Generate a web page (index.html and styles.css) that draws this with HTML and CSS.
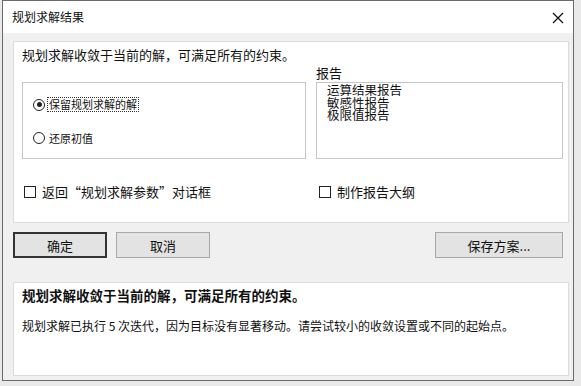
FILE: index.html
```html
<!DOCTYPE html>
<html lang="zh-CN">
<head>
  <meta charset="UTF-8">
  <title>规划求解结果</title>
  <link rel="stylesheet" href="styles.css">
</head>
<body>
  <div class="dialog">
    <!-- Title bar -->
    <div class="titlebar">
      <span class="title">规划求解结果</span>
      <svg class="close" width="12" height="12" viewBox="0 0 12 12">
        <path d="M1 1 L11 11 M11 1 L1 11" stroke="#111" stroke-width="1.3" fill="none"/>
      </svg>
    </div>

    <div class="dialog-body">
      <!-- Result options -->
      <div class="panel panel-top">
        <p class="message">规划求解收敛于当前的解，可满足所有的约束。</p>
        <div class="options">
          <div class="groupbox">
            <label class="radio-row">
              <span class="radio checked"></span>
              <span class="focus-label">保留规划求解的解</span>
            </label>
            <label class="radio-row">
              <span class="radio"></span>
              <span class="radio-text">还原初值</span>
            </label>
          </div>
          <div class="reports">
            <div class="reports-label">报告</div>
            <ul class="listbox">
              <li>运算结果报告</li>
              <li>敏感性报告</li>
              <li>极限值报告</li>
            </ul>
          </div>
        </div>
        <div class="checks">
          <label class="check-row check-left"><span class="checkbox"></span>返回“规划求解参数”对话框</label>
          <label class="check-row"><span class="checkbox"></span>制作报告大纲</label>
        </div>
      </div>

      <!-- Buttons -->
      <div class="buttons">
        <button class="btn btn-default">确定</button>
        <button class="btn">取消</button>
        <button class="btn btn-save">保存方案...</button>
      </div>

      <!-- Info -->
      <div class="panel panel-info">
        <p class="info-title">规划求解收敛于当前的解，可满足所有的约束。</p>
        <p class="info-text">规划求解已执行 5 次迭代，因为目标没有显著移动。请尝试较小的收敛设置或不同的起始点。</p>
      </div>
    </div>
  </div>
</body>
</html>
```

FILE: styles.css
```css
body {
  margin: 0;
  background: #e9e9e9;
  font-family: "Noto Sans CJK SC", "Liberation Sans", sans-serif;
  color: #111;
}
.dialog {
  margin-left: 2px;
  width: 570px;
  height: 379px;
  border: 1px solid #6a6a6a;
  background: #f0f0f0;
  display: flex;
  flex-direction: column;
}
.titlebar {
  height: 32px;
  background: #fff;
  display: flex;
  align-items: center;
  justify-content: space-between;
  padding: 0 9px 0 9px;
}
.title {
  font-size: 12px;
  margin-top: -1px;
}
.close {
  display: block;
  margin-top: 1px;
}
.dialog-body {
  padding: 8px 4px 0 10px;
}
.panel {
  background: #fff;
  border: 1px solid #dcdcdc;
}
.panel-top {
  height: 180px;
  padding: 0 5px 0 8px;
}
p {
  margin: 0;
}
.message {
  font-size: 13px;
  line-height: 16px;
  margin-top: 5px;
}
.options {
  display: flex;
  gap: 10px;
  margin-top: 2px;
}
.groupbox {
  margin-top: 17px;
  width: 284px;
  height: 77px;
  box-sizing: border-box;
  border: 1px solid #c6c6c6;
  display: flex;
  flex-direction: column;
  padding: 14px 0 0 10px;
  gap: 18px;
}
.radio-row {
  display: flex;
  align-items: center;
  font-size: 11px;
  height: 15px;
}
.radio {
  width: 10px;
  height: 10px;
  border: 1px solid #222;
  border-radius: 50%;
  background: #fff;
  position: relative;
  margin-right: 2px;
}
.radio.checked::after {
  content: "";
  position: absolute;
  left: 2.5px;
  top: 2.5px;
  width: 5px;
  height: 5px;
  border-radius: 50%;
  background: #222;
}
.focus-label {
  border: 1px dotted #333;
  padding: 0 1px;
  line-height: 13px;
}
.radio-text {
  padding-left: 2px;
}
.reports {
  flex: 1;
}
.reports-label {
  font-size: 13px;
  line-height: 16px;
  height: 17px;
}
.listbox {
  list-style: none;
  margin: 0;
  height: 77px;
  box-sizing: border-box;
  border: 1px solid #c6c6c6;
  padding: 0 0 0 10px;
  font-size: 12.5px;
  line-height: 13px;
}
.listbox li {
  height: 12.5px;
}
.checks {
  display: flex;
  margin-top: 23px;
  padding-left: 2px;
}
.check-row {
  display: flex;
  align-items: center;
  font-size: 13px;
  gap: 6px;
}
.check-left {
  width: 295px;
}
.checkbox {
  width: 10px;
  height: 10px;
  border: 1px solid #222;
  background: #fff;
}
.buttons {
  display: flex;
  gap: 9px;
  margin-top: 9px;
  padding-right: 6px;
}
.btn {
  font-family: inherit;
  font-size: 13px;
  color: #111;
  width: 94px;
  height: 26px;
  background: #e3e3e3;
  border: 1px solid #a8a8a8;
  padding: 0;
}
.btn-default {
  border: 2px solid #333;
}
.btn-save {
  margin-left: auto;
  width: 128px;
}
.panel-info {
  margin-top: 24px;
  height: 92px;
  padding: 0 8px;
}
.info-title {
  font-size: 13.5px;
  font-weight: bold;
  line-height: 18px;
  margin-top: 3px;
}
.info-text {
  font-size: 12px;
  line-height: 16px;
  margin-top: 14px;
}
```
